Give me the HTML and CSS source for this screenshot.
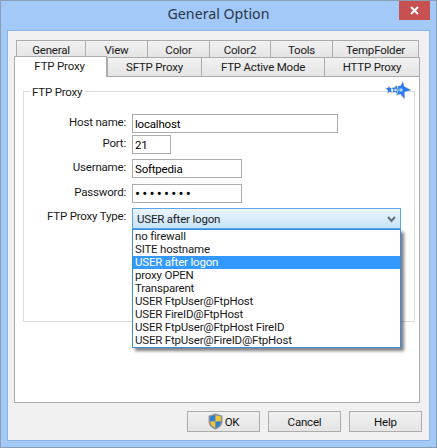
FILE: index.html
```html
<!DOCTYPE html>
<html lang="en">
<head>
    <meta charset="UTF-8">
    <meta name="viewport" content="width=device-width, initial-scale=1.0">
    <title>General Option</title>
    <link rel="stylesheet" href="styles.css">
</head>
<body>
    <div class="window">
        <div class="titlebar">
            <span class="title">General Option</span>
            <button class="close" type="button" aria-label="Close">
                <svg width="9" height="9" viewBox="0 0 9 9"><path d="M1 1 L8 8 M8 1 L1 8" stroke="#fff" stroke-width="2" fill="none"/></svg>
            </button>
        </div>

        <div class="client">
            <div class="tabs">
                <div class="tab-row tab-row-back">
                    <div class="tab w-general">General</div>
                    <div class="tab w-view">View</div>
                    <div class="tab w-color">Color</div>
                    <div class="tab w-color2">Color2</div>
                    <div class="tab w-tools">Tools</div>
                    <div class="tab w-temp">TempFolder</div>
                </div>
                <div class="tab-row tab-row-front">
                    <div class="tab active w-ftp">FTP Proxy</div>
                    <div class="tab w-sftp">SFTP Proxy</div>
                    <div class="tab w-active">FTP Active Mode</div>
                    <div class="tab w-http">HTTP Proxy</div>
                </div>
            </div>

            <div class="panel">
                <fieldset class="group">
                    <legend>FTP Proxy</legend>
                    <svg class="star" width="27" height="19" viewBox="0 0 27 19">
                        <g fill="#2a7df0" stroke="#efe6d6" stroke-width="1.5" paint-order="stroke" stroke-linejoin="round">
                            <path d="M1 7 L3 7 L4 5.5 L5 7 L7 7 L5.8 9 L7 11.5 L4.5 10.8 L2.5 12 L3 9.5 Z"/>
                            <path d="M7 7 L10 6.5 L11 4.5 L12.5 6.5 L14 8 L12.5 10 L12 12.5 L10 11 L7.5 11.5 L8.5 9 Z"/>
                            <path d="M13 5 L15.5 5 L18 0.8 L19 5.5 L26 9 L19.5 11 L19.5 18 L15.5 13 L11.5 14 L13.5 9.5 Z"/>
                        </g>
                        <circle cx="10.5" cy="9" r="1.3" fill="#cfe4ff"/>
                        <circle cx="16" cy="9" r="1.8" fill="#a8d0ff"/>
                    </svg>

                    <div class="form">
                        <div class="row">
                            <label>Host name:</label>
                            <input class="field field-host" type="text" value="localhost">
                        </div>
                        <div class="row row-port">
                            <label>Port:</label>
                            <input class="field field-port" type="text" value="21">
                        </div>
                        <div class="row row-user">
                            <label>Username:</label>
                            <input class="field field-user" type="text" value="Softpedia">
                        </div>
                        <div class="row row-pass">
                            <label>Password:</label>
                            <input class="field field-user field-pass" type="password" value="softpedi">
                        </div>
                        <div class="row row-type">
                            <label>FTP Proxy Type:</label>
                            <div class="combo">
                                <span>USER after logon</span>
                                <svg class="chevron" width="9" height="7" viewBox="0 0 9 7"><path d="M1 1 L4.5 5 L8 1" stroke="#66707a" stroke-width="2" fill="none"/></svg>
                                <ul class="dropdown">
                                    <li>no firewall</li>
                                    <li>SITE hostname</li>
                                    <li class="selected">USER after logon</li>
                                    <li>proxy OPEN</li>
                                    <li>Transparent</li>
                                    <li>USER FtpUser@FtpHost</li>
                                    <li>USER FireID@FtpHost</li>
                                    <li>USER FtpUser@FtpHost FireID</li>
                                    <li>USER FtpUser@FireID@FtpHost</li>
                                </ul>
                            </div>
                        </div>
                    </div>
                </fieldset>
            </div>

            <div class="buttons">
                <button class="btn" type="button">
                    <svg class="shield" width="15" height="17" viewBox="0 0 14 16">
                        <path d="M7 0.5 L13.5 2.5 L13.5 8 C13.5 12 10 14.5 7 15.5 C4 14.5 0.5 12 0.5 8 L0.5 2.5 Z" fill="#8a8f98"/>
                        <path d="M7 2 L2 3.4 L2 8 L7 8 Z" fill="#2f7fd8"/>
                        <path d="M7 2 L12 3.4 L12 8 L7 8 Z" fill="#f3c92f"/>
                        <path d="M2 8 C2.2 10.8 4.6 13 7 14 L7 8 Z" fill="#f3c92f"/>
                        <path d="M12 8 C11.8 10.8 9.4 13 7 14 L7 8 Z" fill="#2f7fd8"/>
                    </svg>
                    OK
                </button>
                <button class="btn" type="button">Cancel</button>
                <button class="btn" type="button">Help</button>
            </div>
        </div>
    </div>
</body>
</html>
```

FILE: styles.css
```css
* {
    box-sizing: border-box;
}

body {
    margin: 0;
    font-family: Roboto, "Liberation Sans", sans-serif;
    font-size: 11.5px;
    letter-spacing: -0.2px;
    line-height: 14px;
    color: #1a1a1a;
    background: #a2c9f8;
}

.window {
    width: 437px;
    height: 448px;
    border: 1px solid #8a9db5;
    background: #a2c9f8;
    display: flex;
    flex-direction: column;
}

.titlebar {
    height: 29px;
    flex: none;
    position: relative;
    display: flex;
    justify-content: center;
    align-items: center;
}

.title {
    font-family: "Noto Sans", sans-serif;
    font-size: 14.2px;
    letter-spacing: 0;
    color: #2b3648;
    margin-bottom: 3px;
}

.close {
    position: absolute;
    top: 0;
    right: 6px;
    width: 31px;
    height: 19px;
    padding: 0;
    border: 0;
    background: #c75050;
    display: flex;
    justify-content: center;
    align-items: center;
}

.client {
    flex: 1;
    margin: 0 6px 6px;
    border: 1px solid #8cb2e2;
    background: #f0f0f0;
    padding: 0 0 0 6px;
}

.tabs {
    margin-top: 9px;
}

.tab-row {
    display: flex;
}

.tab-row-back {
    height: 17px;
    margin-left: 2px;
}

.tab-row-front {
    height: 19px;
}

.tab {
    border: 1px solid #acacac;
    border-right-width: 0;
    border-bottom-width: 0;
    background: linear-gradient(#f2f2f2, #e4e4e4);
    text-align: center;
    line-height: 18px;
    white-space: nowrap;
}

.tab:last-child {
    border-right-width: 1px;
}

.tab-row-back .tab {
    line-height: 18px;
}

.w-general { width: 69px; }
.w-view { width: 62px; }
.w-color { width: 62px; }
.w-color2 { width: 61px; }
.w-tools { width: 62px; }
.w-temp { width: 87px; }
.w-ftp { width: 93px; }
.w-sftp { width: 94px; }
.w-active { width: 123px; }
.w-http { width: 96px; }

.tab.active {
    position: relative;
    z-index: 2;
    height: 21px;
    margin-top: -1px;
    background: #fff;
    border-right-width: 1px;
    padding-right: 2px;
}

.panel {
    width: 406px;
    height: 327px;
    border: 1px solid #acacac;
    background: #fff;
    padding: 6px 4px 0 8px;
    position: relative;
}

.group {
    position: relative;
    height: 239px;
    margin: 0;
    padding: 15px 0 0;
    border: 1px solid #dcdcdc;
}

.group legend {
    margin-left: 6px;
    padding: 2px 2px 0;
}

.star {
    position: absolute;
    top: -18px;
    right: 2px;
}

.form {
    display: flex;
    flex-direction: column;
}

.row {
    display: flex;
    gap: 6px;
    align-items: flex-start;
}

.row label {
    width: 102px;
    text-align: right;
    padding-top: 1px;
}

.row-port {
    margin-top: 2px;
}

.row-user {
    margin-top: 5px;
}

.row-pass {
    margin-top: 6px;
}

.row-type {
    margin-top: 5px;
}

.field {
    height: 19px;
    border: 1px solid #acacac;
    padding: 1px 2px 0;
    font: inherit;
    letter-spacing: inherit;
    color: #000;
    background: #fff;
    outline: none;
}

.field-host { width: 206px; }
.field-port { width: 39px; }
.field-user { width: 110px; }

.field-pass {
    font-size: 15px;
    letter-spacing: 2.2px;
}

.combo {
    position: relative;
    width: 269px;
    height: 21px;
    border: 1px solid #5ba6e2;
    background: linear-gradient(#ecf5fd, #c6e3f7);
    padding: 3px 0 0 4px;
}

.chevron {
    position: absolute;
    right: 4px;
    top: 7px;
}

.dropdown {
    position: absolute;
    left: -1px;
    top: 20px;
    width: 269px;
    margin: 0;
    padding: 0;
    list-style-type: none;
    border: 1px solid #3b8ede;
    background: #fff;
    box-shadow: 3px 3px 3px rgba(0, 0, 0, 0.5);
}

.dropdown li {
    height: 13px;
    line-height: 13px;
    padding-left: 2px;
}

.dropdown li.selected {
    background: #3399ff;
    color: #fff;
}

.buttons {
    display: flex;
    justify-content: flex-end;
    gap: 8px;
    margin-top: 8px;
    padding-right: 7px;
}

.btn {
    width: 73px;
    height: 21px;
    padding: 0;
    border: 1px solid #acacac;
    background: linear-gradient(#f0f0f0, #e5e5e5);
    font: inherit;
    letter-spacing: inherit;
    color: #111;
    display: flex;
    justify-content: center;
    align-items: center;
    gap: 2px;
}
```
